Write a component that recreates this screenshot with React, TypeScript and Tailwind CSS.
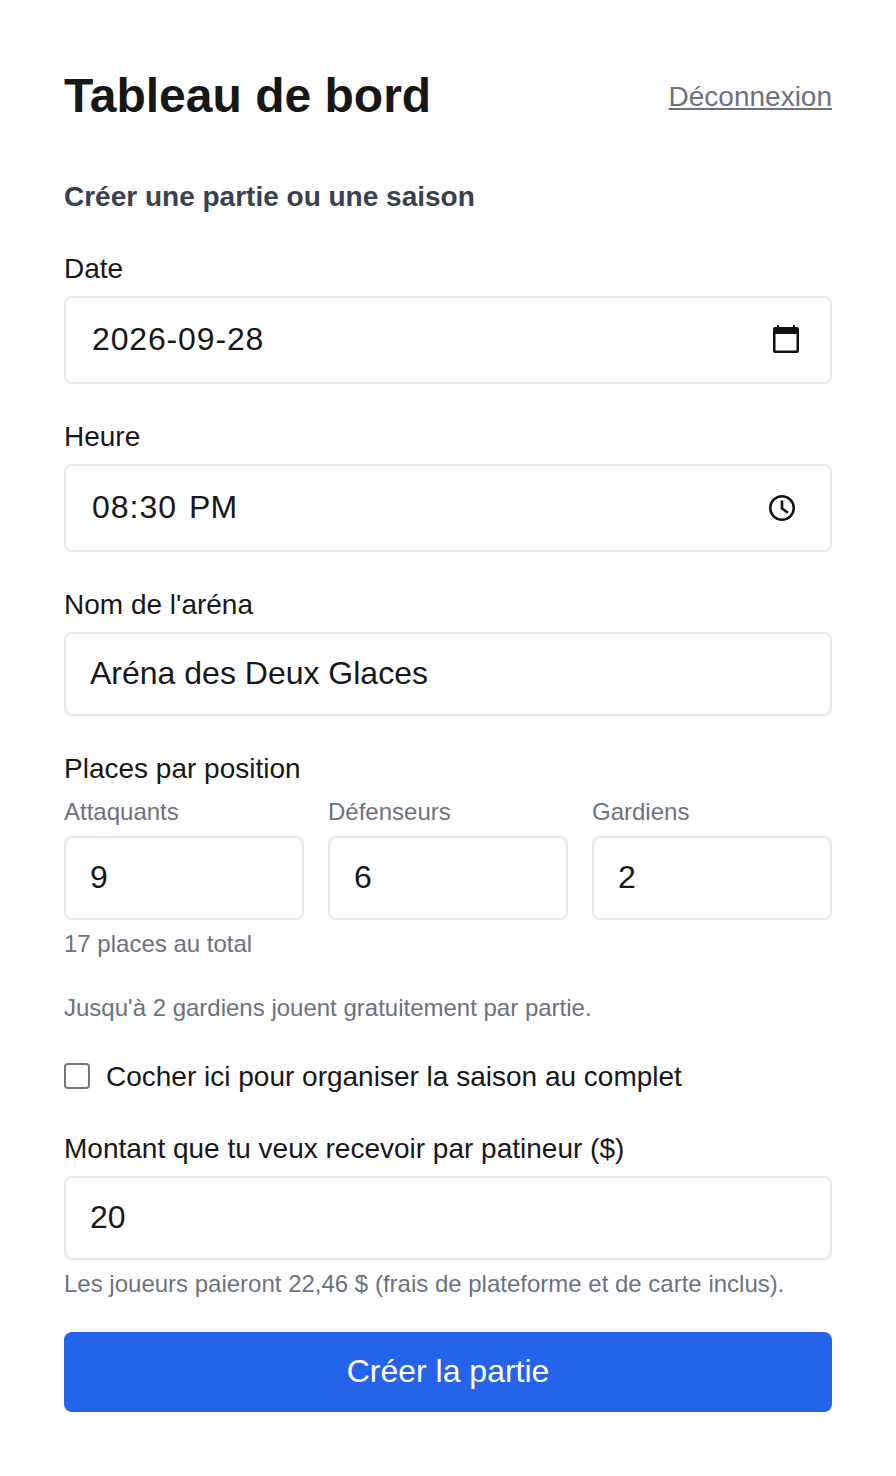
const font = "font-['Liberation_Sans',Arial,sans-serif]";
const fieldBox = "h-[88px] w-full rounded-lg border-2 border-[#e5e7eb] bg-white pl-[26px] flex items-center text-[32px] text-[#171717]";
const inputBox = "h-[84px] w-full rounded-lg border-2 border-[#e5e7eb] bg-white px-6 pb-[2px] text-[32px] text-[#171717] outline-none";

function Label({ children }: { children: React.ReactNode }) {
  return <label className="block text-[28px] leading-10 text-[#171717] pt-[1px] mb-[7px]">{children}</label>;
}

function NumberField({ label, value }: { label: string; value: string }) {
  return (
    <div>
      <label className="block text-2xl leading-8 text-[#6b7280] mb-2">{label}</label>
      <input className={inputBox} type="text" defaultValue={value} readOnly />
    </div>
  );
}

function CalendarIcon() {
  return (
    <svg className="w-[26px] h-[28px] mr-[31px] mb-[2px]" viewBox="0 0 26 28" fill="#111111">
      <path
        fillRule="evenodd"
        d="M2 2h22a2 2 0 0 1 2 2v22a2 2 0 0 1-2 2H2a2 2 0 0 1-2-2V4a2 2 0 0 1 2-2zM2.5 9v16.5h21V9z"
      />
      <rect x="4" y="0" width="2" height="3" />
      <rect x="20" y="0" width="2" height="3" />
    </svg>
  );
}

function ClockIcon() {
  return (
    <svg className="w-[26px] h-[26px] mr-[35px] mb-[1px]" viewBox="0 0 26 26" fill="none" stroke="#111111">
      <circle cx="13" cy="13" r="11.75" strokeWidth="2.5" />
      <path d="M13 5.5v8l6 4.2" strokeWidth="2.6" />
    </svg>
  );
}

export default function App() {
  return (
    <div className={`${font} bg-white min-h-screen px-16 py-16`}>
      {/* en-tête */}
      <div className="flex items-center justify-between mb-12">
        <h1 className="text-5xl leading-16 font-bold text-[#171717]">Tableau de bord</h1>
        <a href="#" className="text-[28px] leading-10 pt-[2px] text-[#6b7280] underline">Déconnexion</a>
      </div>

      <h2 className="text-[28px] leading-10 pt-[1px] font-bold text-[#374151] mb-[31px]">Créer une partie ou une saison</h2>

      <div className="mb-8">
        <Label>Date</Label>
        <div className={`${fieldBox} justify-between`}>
          <span className="pb-[2px] tracking-[0.85px]">2026-09-28</span>
          <CalendarIcon />
        </div>
      </div>

      <div className="mb-8">
        <Label>Heure</Label>
        <div className={`${fieldBox} justify-between`}>
          <span className="flex gap-[12px] pb-[2px]">
            <span className="tracking-[1px]">08:30</span>
            <span>PM</span>
          </span>
          <ClockIcon />
        </div>
      </div>

      <div className="mb-8">
        <Label>Nom de l'aréna</Label>
        <input className={inputBox} type="text" defaultValue="Aréna des Deux Glaces" readOnly />
      </div>

      <div className="mb-8">
        <Label>Places par position</Label>
        <div className="grid grid-cols-3 gap-6">
          <NumberField label="Attaquants" value="9" />
          <NumberField label="Défenseurs" value="6" />
          <NumberField label="Gardiens" value="2" />
        </div>
        <p className="mt-2 text-2xl leading-8 text-[#6b7280]">17 places au total</p>
      </div>

      <p className="mb-8 text-2xl leading-8 text-[#6b7280]">Jusqu'à 2 gardiens jouent gratuitement par partie.</p>

      <div className="mb-8 flex items-center gap-4">
        <input
          type="checkbox"
          readOnly
          className="appearance-none w-[26px] h-[26px] rounded border-2 border-[#767676] bg-white"
        />
        <span className="text-[28px] leading-[38px] pt-[2px] text-[#171717]">Cocher ici pour organiser la saison au complet</span>
      </div>

      <div className="mb-8">
        <Label>Montant que tu veux recevoir par patineur ($)</Label>
        <input className={inputBox} type="text" defaultValue="20" readOnly />
        <p className="mt-2 text-2xl leading-8 text-[#6b7280]">Les joueurs paieront 22,46 $ (frais de plateforme et de carte inclus).</p>
      </div>

      <button className="h-20 w-full rounded-lg bg-[#2563eb] pb-[2px] text-[32px] text-white">Créer la partie</button>
    </div>
  );
}
